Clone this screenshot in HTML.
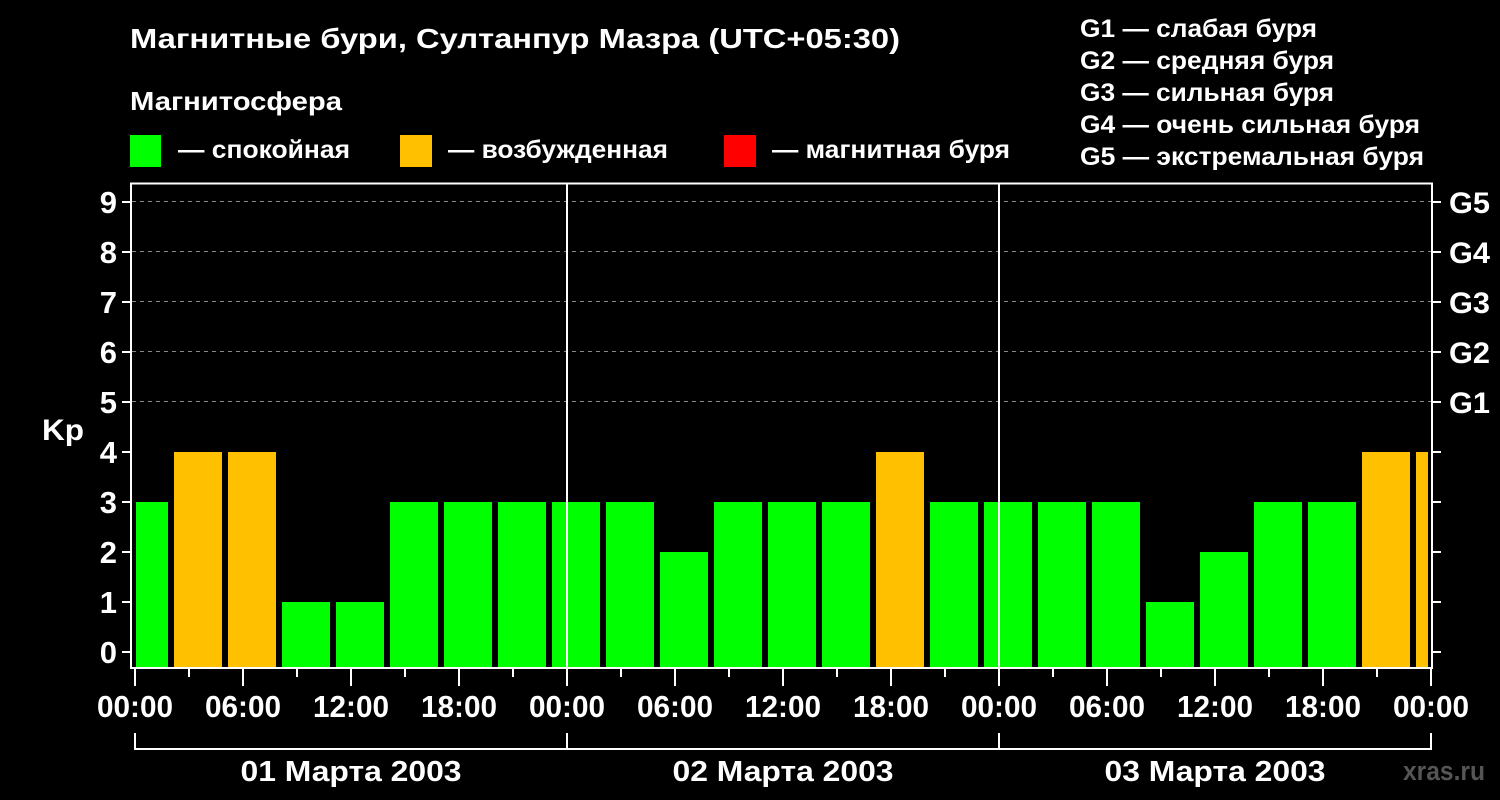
<!DOCTYPE html>
<html><head><meta charset="utf-8"><style>
html,body{margin:0;padding:0;background:#000;width:1500px;height:800px;overflow:hidden}
svg text{font-family:"Liberation Sans",Arial,sans-serif;font-weight:bold;fill:#fff}
</style></head><body>
<svg width="1500" height="800" xmlns="http://www.w3.org/2000/svg">
<rect width="1500" height="800" fill="#000"/>
<text x="130" y="48" font-size="28" textLength="770" lengthAdjust="spacingAndGlyphs">Магнитные бури, Султанпур Мазра (UTC+05:30)</text>
<text x="130" y="110" font-size="26" textLength="212" lengthAdjust="spacingAndGlyphs">Магнитосфера</text>
<rect x="130" y="135" width="31" height="32" fill="#00ff00"/>
<text x="178" y="158" font-size="25" textLength="172" lengthAdjust="spacingAndGlyphs">— спокойная</text>
<rect x="400" y="135" width="32" height="32" fill="#ffc000"/>
<text x="448" y="158" font-size="25" textLength="220" lengthAdjust="spacingAndGlyphs">— возбужденная</text>
<rect x="724" y="135" width="32" height="32" fill="#ff0000"/>
<text x="772" y="158" font-size="25" textLength="238" lengthAdjust="spacingAndGlyphs">— магнитная буря</text>
<g font-size="25">
<text x="1080" y="37" textLength="237" lengthAdjust="spacingAndGlyphs">G1 — слабая буря</text>
<text x="1080" y="69" textLength="254" lengthAdjust="spacingAndGlyphs">G2 — средняя буря</text>
<text x="1080" y="101" textLength="254" lengthAdjust="spacingAndGlyphs">G3 — сильная буря</text>
<text x="1080" y="133" textLength="340" lengthAdjust="spacingAndGlyphs">G4 — очень сильная буря</text>
<text x="1080" y="165" textLength="344" lengthAdjust="spacingAndGlyphs">G5 — экстремальная буря</text>
</g>
<g stroke="#888" stroke-width="1" stroke-dasharray="4,4">
<line x1="132" y1="201.5" x2="1431" y2="201.5"/>
<line x1="132" y1="251.5" x2="1431" y2="251.5"/>
<line x1="132" y1="301.5" x2="1431" y2="301.5"/>
<line x1="132" y1="351.5" x2="1431" y2="351.5"/>
<line x1="132" y1="401.5" x2="1431" y2="401.5"/>
</g>
<g id="bars">
<rect x="136" y="502" width="32" height="166" fill="#00ff00"/>
<rect x="174" y="452" width="48" height="216" fill="#ffc000"/>
<rect x="228" y="452" width="48" height="216" fill="#ffc000"/>
<rect x="282" y="602" width="48" height="66" fill="#00ff00"/>
<rect x="336" y="602" width="48" height="66" fill="#00ff00"/>
<rect x="390" y="502" width="48" height="166" fill="#00ff00"/>
<rect x="444" y="502" width="48" height="166" fill="#00ff00"/>
<rect x="498" y="502" width="48" height="166" fill="#00ff00"/>
<rect x="552" y="502" width="48" height="166" fill="#00ff00"/>
<rect x="606" y="502" width="48" height="166" fill="#00ff00"/>
<rect x="660" y="552" width="48" height="116" fill="#00ff00"/>
<rect x="714" y="502" width="48" height="166" fill="#00ff00"/>
<rect x="768" y="502" width="48" height="166" fill="#00ff00"/>
<rect x="822" y="502" width="48" height="166" fill="#00ff00"/>
<rect x="876" y="452" width="48" height="216" fill="#ffc000"/>
<rect x="930" y="502" width="48" height="166" fill="#00ff00"/>
<rect x="984" y="502" width="48" height="166" fill="#00ff00"/>
<rect x="1038" y="502" width="48" height="166" fill="#00ff00"/>
<rect x="1092" y="502" width="48" height="166" fill="#00ff00"/>
<rect x="1146" y="602" width="48" height="66" fill="#00ff00"/>
<rect x="1200" y="552" width="48" height="116" fill="#00ff00"/>
<rect x="1254" y="502" width="48" height="166" fill="#00ff00"/>
<rect x="1308" y="502" width="48" height="166" fill="#00ff00"/>
<rect x="1362" y="452" width="48" height="216" fill="#ffc000"/>
<rect x="1416" y="452" width="12" height="216" fill="#ffc000"/>
</g>
<g stroke="#fff" stroke-width="2" fill="none">
<polyline points="131,668 131,183.5 1432,183.5 1432,668"/>
<line x1="130" y1="668" x2="1433" y2="668"/>
<line x1="567" y1="183" x2="567" y2="668"/>
<line x1="999" y1="183" x2="999" y2="668"/>
<path d="M122 202H131M122 252H131M122 302H131M122 352H131M122 402H131M122 452H131M122 502H131M122 552H131M122 602H131M122 652H131"/>
<path d="M1432 202H1441M1432 252H1441M1432 302H1441M1432 352H1441M1432 402H1441M1432 452H1441M1432 502H1441M1432 552H1441M1432 602H1441M1432 652H1441"/>
<path d="M135 668V686M189 668V677M243 668V686M297 668V677M351 668V686M405 668V677M459 668V686M513 668V677M567 668V686M621 668V677M675 668V686M729 668V677M783 668V686M837 668V677M891 668V686M945 668V677M999 668V686M1053 668V677M1107 668V686M1161 668V677M1215 668V686M1269 668V677M1323 668V686M1377 668V677M1431 668V686"/>
<path d="M135 733V749H1431V733M567 733V749M999 733V749"/>
</g>
<g font-size="31" text-anchor="end">
<text x="117" y="213">9</text><text x="117" y="263">8</text><text x="117" y="313">7</text>
<text x="117" y="363">6</text><text x="117" y="413">5</text><text x="117" y="463">4</text>
<text x="117" y="513">3</text><text x="117" y="563">2</text><text x="117" y="613">1</text>
<text x="117" y="663">0</text>
</g>
<text x="42" y="440" font-size="30" textLength="42" lengthAdjust="spacingAndGlyphs">Kp</text>
<g font-size="30">
<text x="1449" y="213" textLength="41" lengthAdjust="spacingAndGlyphs">G5</text><text x="1449" y="263" textLength="41" lengthAdjust="spacingAndGlyphs">G4</text><text x="1449" y="313" textLength="41" lengthAdjust="spacingAndGlyphs">G3</text>
<text x="1449" y="363" textLength="41" lengthAdjust="spacingAndGlyphs">G2</text><text x="1449" y="413" textLength="41" lengthAdjust="spacingAndGlyphs">G1</text>
</g>
<g font-size="31" text-anchor="middle">
<text x="135" y="717" textLength="76" lengthAdjust="spacingAndGlyphs">00:00</text><text x="243" y="717" textLength="76" lengthAdjust="spacingAndGlyphs">06:00</text><text x="351" y="717" textLength="76" lengthAdjust="spacingAndGlyphs">12:00</text>
<text x="459" y="717" textLength="76" lengthAdjust="spacingAndGlyphs">18:00</text><text x="567" y="717" textLength="76" lengthAdjust="spacingAndGlyphs">00:00</text><text x="675" y="717" textLength="76" lengthAdjust="spacingAndGlyphs">06:00</text>
<text x="783" y="717" textLength="76" lengthAdjust="spacingAndGlyphs">12:00</text><text x="891" y="717" textLength="76" lengthAdjust="spacingAndGlyphs">18:00</text><text x="999" y="717" textLength="76" lengthAdjust="spacingAndGlyphs">00:00</text>
<text x="1107" y="717" textLength="76" lengthAdjust="spacingAndGlyphs">06:00</text><text x="1215" y="717" textLength="76" lengthAdjust="spacingAndGlyphs">12:00</text><text x="1323" y="717" textLength="76" lengthAdjust="spacingAndGlyphs">18:00</text>
<text x="1431" y="717" textLength="76" lengthAdjust="spacingAndGlyphs">00:00</text>
</g>
<g font-size="29" text-anchor="middle">
<text x="351" y="781" textLength="221" lengthAdjust="spacingAndGlyphs">01 Марта 2003</text>
<text x="783" y="781" textLength="221" lengthAdjust="spacingAndGlyphs">02 Марта 2003</text>
<text x="1215" y="781" textLength="221" lengthAdjust="spacingAndGlyphs">03 Марта 2003</text>
</g>
<text x="1403" y="780" font-size="27" textLength="82" lengthAdjust="spacingAndGlyphs" style="fill:#555">xras.ru</text>
</svg>
</body></html>
